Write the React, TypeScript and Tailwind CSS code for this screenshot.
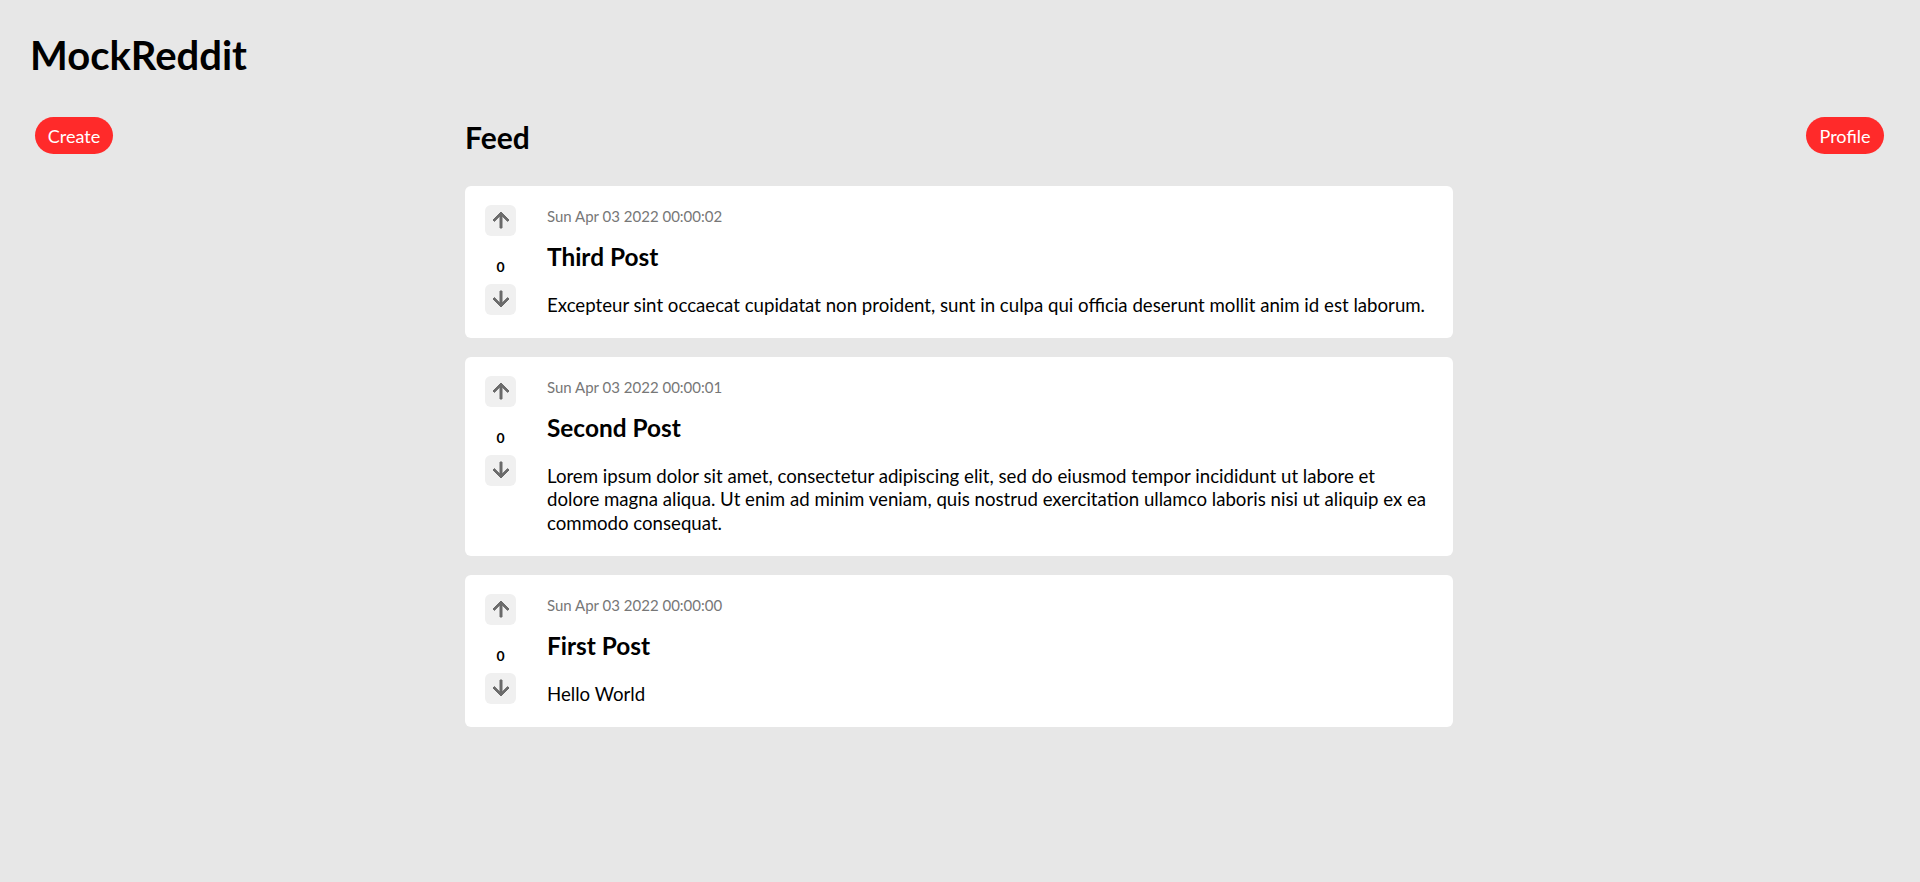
import React from 'react';

interface Post {
    id: number;
    date: string;
    title: string;
    body: string;
    score: number;
}

const posts: Post[] = [
    {
        id: 3,
        date: 'Sun Apr 03 2022 00:00:02',
        title: 'Third Post',
        body: 'Excepteur sint occaecat cupidatat non proident, sunt in culpa qui officia deserunt mollit anim id est laborum.',
        score: 0,
    },
    {
        id: 2,
        date: 'Sun Apr 03 2022 00:00:01',
        title: 'Second Post',
        // break kept where the original font wrapped it
        body: 'Lorem ipsum dolor sit amet, consectetur adipiscing elit, sed do eiusmod tempor incididunt ut labore et\ndolore magna aliqua. Ut enim ad minim veniam, quis nostrud exercitation ullamco laboris nisi ut aliquip ex ea commodo consequat.',
        score: 0,
    },
    {
        id: 1,
        date: 'Sun Apr 03 2022 00:00:00',
        title: 'First Post',
        body: 'Hello World',
        score: 0,
    },
];

// Material style arrows, a little heavier than stock
const ArrowUpIcon: React.FC<React.SVGProps<SVGSVGElement>> = (props) => (
    <svg viewBox="0 0 24 24" fill="currentColor" stroke="currentColor" strokeWidth={1} strokeLinejoin="round" {...props}>
        <path d="M4 12l1.41 1.41L11 7.83V20h2V7.83l5.58 5.59L20 12l-8-8-8 8z" />
    </svg>
);

const ArrowDownIcon: React.FC<React.SVGProps<SVGSVGElement>> = (props) => (
    <svg viewBox="0 0 24 24" fill="currentColor" stroke="currentColor" strokeWidth={1} strokeLinejoin="round" {...props}>
        <path d="M20 12l-1.41-1.41L13 16.17V4h-2v12.17l-5.58-5.59L4 12l8 8 8-8z" />
    </svg>
);

const VoteButton: React.FC<{ children: React.ReactNode }> = ({ children }) => (
    <button
        type="button"
        className="w-[31px] h-[31px] rounded-[6px] bg-[#f0f0f0] text-[#6b6b6b] flex items-center justify-center"
    >
        {children}
    </button>
);

const PostCard: React.FC<{ post: Post }> = ({ post }) => (
    <div className="bg-white rounded-[6px] flex pt-[19px] pl-[20px] pr-[10px] pb-[20.75px]">
        {/* Votes */}
        <div className="flex flex-col items-center w-[31px] shrink-0">
            <VoteButton>
                <ArrowUpIcon className="w-[24px] h-[24px]" />
            </VoteButton>
            <span className="mt-[21.6px] text-[14px] leading-[18px] font-bold text-black">{post.score}</span>
            <div className="mt-[8.4px]">
                <VoteButton>
                    <ArrowDownIcon className="w-[24px] h-[24px]" />
                </VoteButton>
            </div>
        </div>

        {/* Content */}
        <div className="ml-[31px] flex-1 pt-[1.9px]">
            <p className="text-[15px] leading-[18px] text-[#777777]">{post.date}</p>
            <h3 className="mt-[18.4px] text-[24.4px] leading-[28px] font-bold text-black">{post.title}</h3>
            <p className="mt-[22.45px] text-[18.65px] leading-[23.5px] text-black whitespace-pre-line">{post.body}</p>
        </div>
    </div>
);

export default function App() {
    return (
        <div className="min-h-screen bg-[#e7e7e7] font-['Lato',sans-serif] text-black pt-[32.5px]">
            <h1 className="pl-[30px] text-[40px] leading-[44px] font-bold">MockReddit</h1>

            <div className="mt-[40.5px] flex">
                {/* Left sidebar */}
                <div className="w-[465px] shrink-0 pl-[35px]">
                    <button
                        type="button"
                        className="w-[78px] h-[37px] rounded-full bg-[#ff2a2a] text-white text-[18px] leading-none"
                    >
                        Create
                    </button>
                </div>

                {/* Feed */}
                <main className="w-[988px] shrink-0">
                    <h2 className="mt-[3.4px] text-[30px] leading-[34px] font-bold">Feed</h2>
                    <div className="mt-[31.6px] flex flex-col gap-[19px]">
                        {posts.map((post) => (
                            <PostCard key={post.id} post={post} />
                        ))}
                    </div>
                </main>

                {/* Right sidebar */}
                <div className="flex-1 flex justify-end pr-[36px]">
                    <button
                        type="button"
                        className="w-[78px] h-[37px] rounded-full bg-[#ff2a2a] text-white text-[18px] leading-none"
                    >
                        Profile
                    </button>
                </div>
            </div>
        </div>
    );
}
